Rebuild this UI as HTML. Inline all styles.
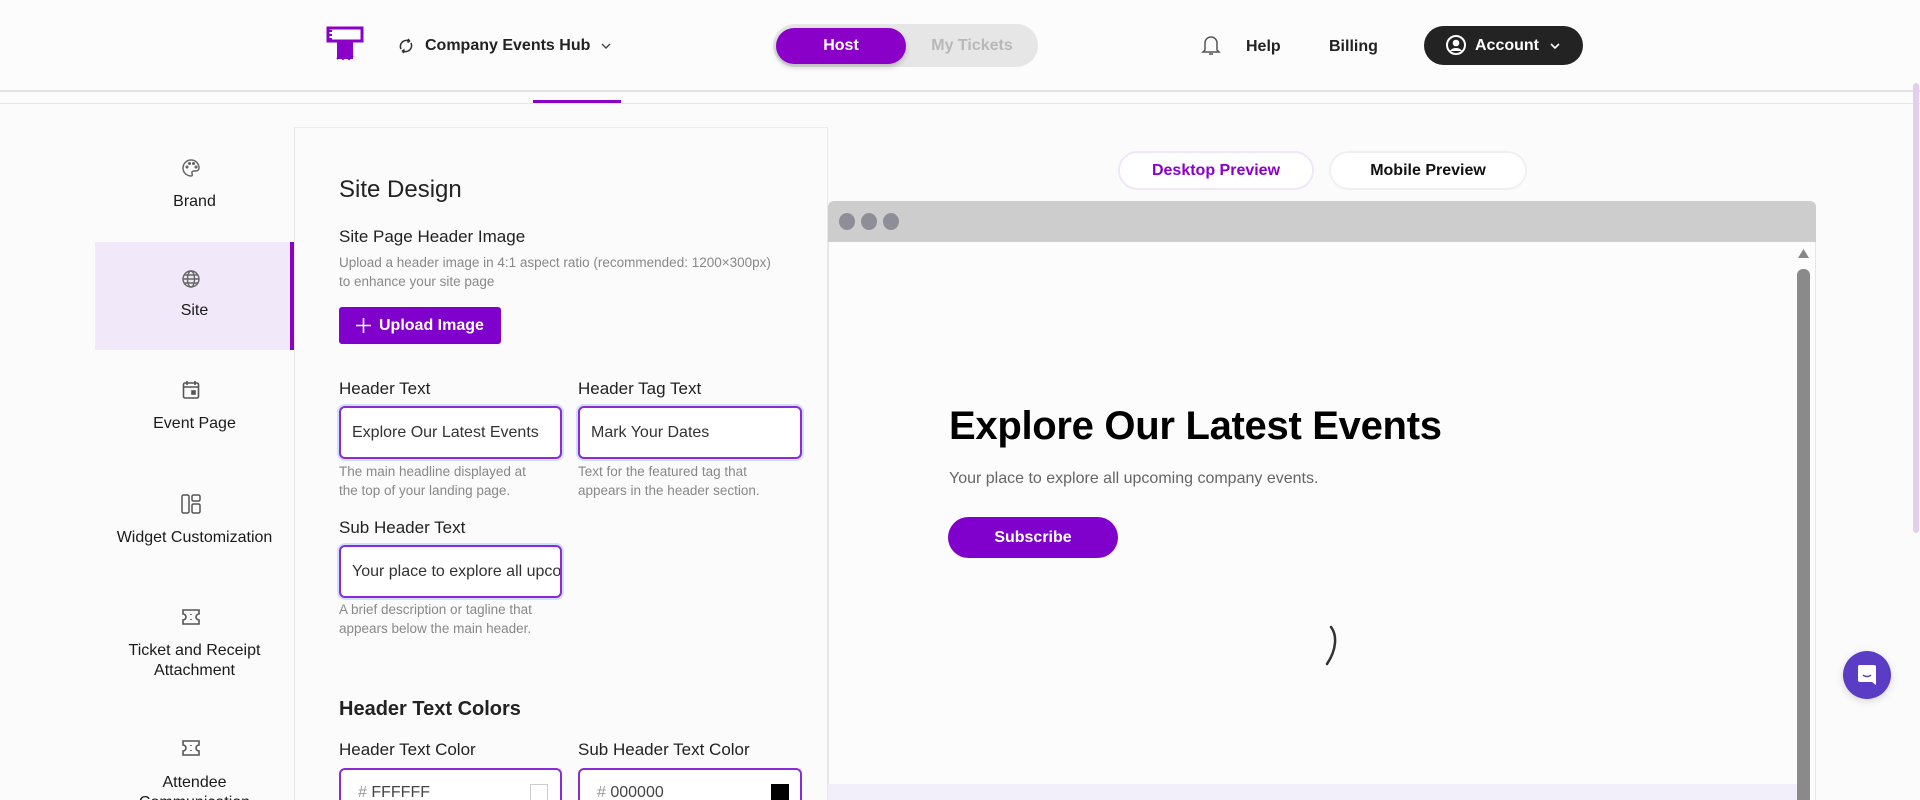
<!DOCTYPE html>
<html style="width:1920px;height:800px;overflow:hidden"><head><meta charset="utf-8"><style>
*{box-sizing:border-box;margin:0;padding:0}
body{width:1920px;height:800px;overflow:hidden;background:#fbfbfb;font-family:"Liberation Sans",sans-serif;color:#1a1a1a;position:relative}
.a{position:absolute}
.hdr{left:0;top:0;width:1920px;height:92px;background:#fcfcfc;border-bottom:2px solid #e2e2e2}
.nav{font-size:16px;font-weight:bold;color:#222}
.item{position:absolute;left:0;width:199px;text-align:center;font-size:16px;color:#1a1a1a}
.lbl{font-size:17px;color:#222}
.hint{font-size:13.5px;color:#888;line-height:19px}
.inp{position:absolute;height:53px;border:2px solid #8a2bd6;border-radius:6px;background:#fff;box-shadow:0 0 0 2px #cfe0ff;font-size:16px;color:#333;padding:16px 0 0 11px;white-space:nowrap;overflow:hidden}
</style></head><body>
<div class="a hdr"></div>
<div class="a" style="left:533px;top:100px;width:88px;height:3px;background:#8a00c8"></div>
<div class="a" style="left:0;top:103px;width:1920px;height:1px;background:#e6e6e6"></div>
<svg class="a" style="left:326px;top:26px" width="40" height="36" viewBox="0 0 40 36"><rect x="2" y="2" width="34" height="13" fill="#fff" stroke="#8a00c8" stroke-width="3"/><path d="M2 5h4M2 9h4M2 13h4" stroke="#8a00c8" stroke-width="2"/><rect x="11" y="15" width="16" height="18" fill="#8a00c8"/><path d="M11 33l3-3 3 3 3-3 3 3 4-3" stroke="#8a00c8" stroke-width="2" fill="none"/></svg>
<svg class="a" style="left:397px;top:37px" width="18" height="18" viewBox="0 0 18 18" fill="none" stroke="#333" stroke-width="1.6"><path d="M4 12a6 6 0 0 1 8-8M14 6a6 6 0 0 1-8 8"/><path d="M11 2l1.5 2-2 1.5M7 16l-1.5-2 2-1.5"/></svg>
<div class="a nav" style="left:425px;top:37px;font-size:16px">Company Events Hub</div>
<svg class="a" style="left:601px;top:42px" width="10" height="8"><path d="M1 2l4 4 4-4" stroke="#444" stroke-width="1.4" fill="none"/></svg>
<div class="a" style="left:773px;top:24px;width:265px;height:43px;border-radius:22px;background:#e6e6e6"></div>
<div class="a" style="left:776px;top:28px;width:130px;height:36px;border-radius:18px;background:#8a00c8;box-shadow:0 3px 6px rgba(0,0,0,.2);color:#fff;font-size:16px;font-weight:bold;text-align:center;line-height:36px">Host</div>
<div class="a" style="left:910px;top:28px;width:124px;height:36px;color:#b8b8b8;font-size:16px;font-weight:bold;text-align:center;line-height:36px">My Tickets</div>
<svg class="a" style="left:1201px;top:34px" width="20" height="22" viewBox="0 0 20 22" fill="none" stroke="#555" stroke-width="1.5"><path d="M4 16V9a6 6 0 0 1 12 0v7l2 2H2z"/><path d="M8 20h4"/></svg>
<div class="a nav" style="left:1246px;top:38px">Help</div>
<div class="a nav" style="left:1329px;top:38px">Billing</div>
<div class="a" style="left:1424px;top:26px;width:159px;height:39px;border-radius:20px;background:#232323;color:#fff;font-weight:bold;font-size:16px;line-height:39px;padding-left:51px">Account</div>
<svg class="a" style="left:1445px;top:34px" width="22" height="22" viewBox="0 0 22 22"><circle cx="11" cy="11" r="9" fill="none" stroke="#fff" stroke-width="2"/><circle cx="11" cy="9" r="3.3" fill="#fff"/><path d="M5 17c2-4 10-4 12 0" fill="#fff"/></svg>
<svg class="a" style="left:1550px;top:42px" width="10" height="8"><path d="M1 2l4 4 4-4" stroke="#fff" stroke-width="1.6" fill="none"/></svg>

<div class="a" style="left:95px;top:242px;width:199px;height:108px;background:#f1e8f9;border-right:4px solid #8a00c8"></div>
<div class="a" style="left:294px;top:127px;width:1px;height:673px;background:#e4e4e4"></div>
<svg class="a" style="left:181px;top:158px" width="20" height="20" viewBox="0 0 20 20" fill="none" stroke="#666" stroke-width="1.5"><path d="M10 2a8 8 0 0 0 0 16c1.5 0 1.5-1.5 1-2.5s0-2.5 2-2.5h2a3 3 0 0 0 3-3c0-4.5-3.5-8-8-8z"/><circle cx="6" cy="9" r=".8" fill="#666"/><circle cx="8.5" cy="5.5" r=".8" fill="#666"/><circle cx="12.5" cy="5.5" r=".8" fill="#666"/><circle cx="15" cy="9" r=".8" fill="#666"/></svg>
<div class="item" style="left:95px;top:193px">Brand</div>
<svg class="a" style="left:182px;top:270px" width="18" height="18" viewBox="0 0 18 18" fill="none" stroke="#666" stroke-width="1.4"><circle cx="9" cy="9" r="8"/><ellipse cx="9" cy="9" rx="3.5" ry="8"/><path d="M1 9h16M2.5 5h13M2.5 13h13"/></svg>
<div class="item" style="left:95px;top:302px">Site</div>
<svg class="a" style="left:182px;top:380px" width="18" height="20" viewBox="0 0 18 20" fill="none" stroke="#555" stroke-width="1.6"><rect x="1.5" y="3" width="15" height="15" rx="1.5"/><path d="M5 1v4M13 1v4M1.5 7h15"/><rect x="10" y="11" width="3" height="3" fill="#555"/></svg>
<div class="item" style="left:95px;top:415px">Event Page</div>
<svg class="a" style="left:181px;top:494px" width="20" height="20" viewBox="0 0 20 20" fill="none" stroke="#555" stroke-width="1.5"><rect x="1" y="1" width="7" height="18" rx="1.5"/><rect x="11" y="1" width="8" height="6" rx="1.5"/><rect x="11" y="10" width="8" height="9" rx="1.5"/></svg>
<div class="item" style="left:95px;top:529px">Widget Customization</div>
<svg class="a" style="left:181px;top:608px" width="20" height="18" viewBox="0 0 20 18" fill="none" stroke="#555" stroke-width="1.6"><path d="M2 2h16v4a3 3 0 0 0 0 6v4H2v-4a3 3 0 0 0 0-6z"/><path d="M10 6v1M10 11v1"/></svg>
<div class="item" style="left:95px;top:641px;line-height:20px">Ticket and Receipt<br>Attachment</div>
<svg class="a" style="left:181px;top:739px" width="20" height="18" viewBox="0 0 20 18" fill="none" stroke="#555" stroke-width="1.6"><path d="M2 2h16v4a3 3 0 0 0 0 6v4H2v-4a3 3 0 0 0 0-6z"/><path d="M10 6v1M10 11v1"/></svg>
<div class="item" style="left:95px;top:773px;height:27px;overflow:hidden;line-height:20px">Attendee<br>Communication</div>

<div class="a" style="left:294px;top:127px;width:533px;height:1px;background:#ececec"></div>
<div class="a" style="left:827px;top:127px;width:1px;height:673px;background:#e8e8e8"></div>
<div class="a" style="left:339px;top:176px;font-size:24px;color:#222">Site Design</div>
<div class="a lbl" style="left:339px;top:227px">Site Page Header Image</div>
<div class="a hint" style="left:339px;top:253px">Upload a header image in 4:1 aspect ratio (recommended: 1200×300px)<br>to enhance your site page</div>
<div class="a" style="left:339px;top:307px;width:162px;height:37px;background:#8000cc;border-radius:3px;color:#fff;font-weight:bold;font-size:16px;line-height:37px;padding-left:40px">Upload Image</div>
<svg class="a" style="left:355px;top:317px" width="17" height="17"><path d="M8.5 1v15M1 8.5h15" stroke="#fff" stroke-width="1.6"/></svg>
<div class="a lbl" style="left:339px;top:379px">Header Text</div>
<div class="a lbl" style="left:578px;top:379px">Header Tag Text</div>
<div class="inp" style="left:339px;top:406px;width:223px">Explore Our Latest Events</div>
<div class="inp" style="left:578px;top:406px;width:224px">Mark Your Dates</div>
<div class="a hint" style="left:339px;top:462px">The main headline displayed at<br>the top of your landing page.</div>
<div class="a hint" style="left:578px;top:462px">Text for the featured tag that<br>appears in the header section.</div>
<div class="a lbl" style="left:339px;top:518px">Sub Header Text</div>
<div class="inp" style="left:339px;top:545px;width:223px">Your place to explore all upcoming</div>
<div class="a hint" style="left:339px;top:600px">A brief description or tagline that<br>appears below the main header.</div>
<div class="a" style="left:339px;top:698px;font-size:20px;font-weight:bold;color:#222">Header Text Colors</div>
<div class="a lbl" style="left:339px;top:740px">Header Text Color</div>
<div class="a lbl" style="left:578px;top:740px">Sub Header Text Color</div>
<div class="a" style="left:339px;top:768px;width:223px;height:32px;border:2px solid #8a2bd6;border-bottom:none;border-radius:6px 6px 0 0;background:#fff;font-size:16px;color:#444;padding:14px 0 0 17px;overflow:hidden"><span style="color:#999">#</span> FFFFFF</div>
<div class="a" style="left:530px;top:784px;width:18px;height:16px;border:1px solid #ccc;border-bottom:none;background:#fff"></div>
<div class="a" style="left:578px;top:768px;width:224px;height:32px;border:2px solid #8a2bd6;border-bottom:none;border-radius:6px 6px 0 0;background:#fff;font-size:16px;color:#444;padding:14px 0 0 17px;overflow:hidden"><span style="color:#999">#</span> 000000</div>
<div class="a" style="left:771px;top:784px;width:18px;height:16px;background:#000"></div>

<div class="a" style="left:1118px;top:151px;width:196px;height:39px;border:2px solid #efe6fa;border-radius:20px;background:#fff;color:#8a00c8;font-weight:bold;font-size:16px;text-align:center;line-height:35px">Desktop Preview</div>
<div class="a" style="left:1329px;top:151px;width:198px;height:39px;border:2px solid #f0f0f0;border-radius:20px;background:#fff;color:#111;font-weight:bold;font-size:16px;text-align:center;line-height:35px">Mobile Preview</div>
<div class="a" style="left:828px;top:201px;width:988px;height:599px;background:#fcfcfc;border:1px solid #e6e6e6;border-bottom:none;border-radius:6px 6px 0 0"></div>
<div class="a" style="left:828px;top:201px;width:988px;height:41px;background:#cdcdcd;border-radius:6px 6px 0 0"></div>
<div class="a" style="left:839px;top:213px;width:16px;height:17px;border-radius:50%;background:#8e8e99"></div>
<div class="a" style="left:861px;top:213px;width:16px;height:17px;border-radius:50%;background:#8e8e99"></div>
<div class="a" style="left:883px;top:213px;width:16px;height:17px;border-radius:50%;background:#8e8e99"></div>
<div class="a" style="left:828px;top:784px;width:970px;height:16px;background:#f2effa"></div>
<svg class="a" style="left:1797px;top:248px" width="13" height="12"><path d="M6.5 1L12 10H1z" fill="#888"/></svg>
<div class="a" style="left:1797px;top:269px;width:13px;height:531px;border-radius:6px 6px 0 0;background:#8a8a8a"></div>
<div class="a" style="left:949px;top:404px;font-size:40px;font-weight:bold;color:#000;letter-spacing:-0.3px">Explore Our Latest Events</div>
<div class="a" style="left:949px;top:470px;font-size:16px;color:#666">Your place to explore all upcoming company events.</div>
<div class="a" style="left:948px;top:517px;width:170px;height:41px;border-radius:21px;background:#8000cc;color:#fff;font-weight:bold;font-size:16px;text-align:center;line-height:41px">Subscribe</div>
<svg class="a" style="left:1320px;top:625px" width="20" height="42"><path d="M11 2c6 8 6 22-4 37" stroke="#333" stroke-width="2.5" fill="none" stroke-linecap="round"/></svg>
<div class="a" style="left:1913px;top:83px;width:6px;height:450px;border-radius:3px;background:#e2cff0"></div>
<div class="a" style="left:1843px;top:651px;width:48px;height:48px;border-radius:50%;background:#5b3cc4;box-shadow:0 2px 8px rgba(0,0,0,.15)"></div>
<svg class="a" style="left:1857px;top:664px" width="20" height="22" viewBox="0 0 20 22"><path d="M3 1h14a2 2 0 0 1 2 2v18l-4-3H3a2 2 0 0 1-2-2V3a2 2 0 0 1 2-2z" fill="#fff"/><path d="M6 11c2 2 6 2 8 0" stroke="#5b3cc4" stroke-width="1.4" fill="none"/></svg>
</body></html>
